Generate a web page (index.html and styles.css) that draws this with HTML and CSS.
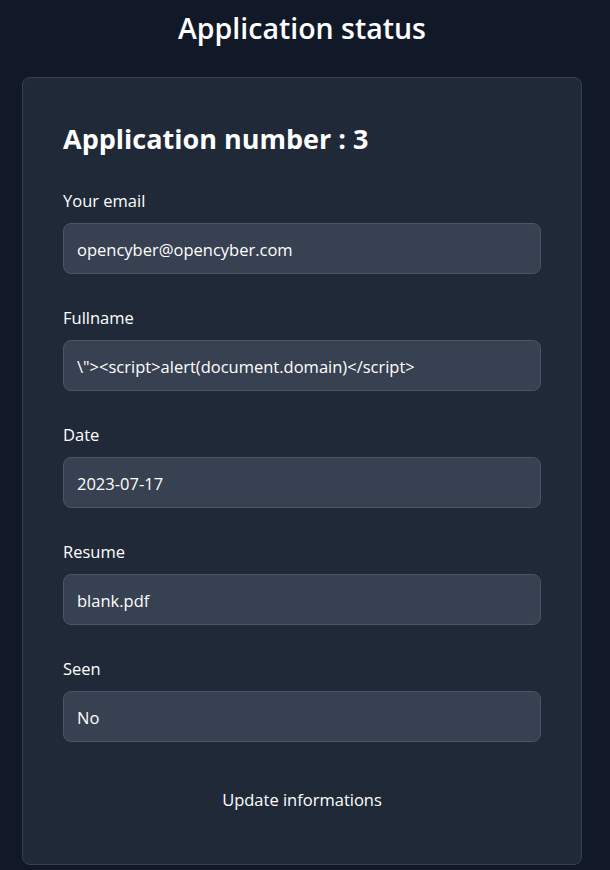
FILE: index.html
```html
<!DOCTYPE html>
<html lang="en">
<head>
<meta charset="utf-8">
<title>Application status</title>
<link rel="stylesheet" href="styles.css">
</head>
<body>
<main class="page">
  <h1 class="page-title">Application status</h1>
  <section class="card">
    <h2 class="card-title">Application number : 3</h2>
    <div class="field">
      <label class="field-label">Your email</label>
      <div class="field-value">opencyber@opencyber.com</div>
    </div>
    <div class="field">
      <label class="field-label">Fullname</label>
      <div class="field-value">\"&gt;&lt;script&gt;alert(document.domain)&lt;/script&gt;</div>
    </div>
    <div class="field">
      <label class="field-label">Date</label>
      <div class="field-value">2023-07-17</div>
    </div>
    <div class="field">
      <label class="field-label">Resume</label>
      <div class="field-value">blank.pdf</div>
    </div>
    <div class="field">
      <label class="field-label">Seen</label>
      <div class="field-value">No</div>
    </div>
    <div class="actions">
      <button class="update-btn" type="button">Update informations</button>
    </div>
  </section>
</main>
</body>
</html>
```
FILE: styles.css
```css
* {
  box-sizing: border-box;
}

html, body {
  margin: 0;
  padding: 0;
  background: #111827;
}

body {
  font-family: "Open Sans", "Noto Sans", sans-serif;
  color: #ffffff;
  font-size: 16.5px;
  line-height: 24px;
}

.page {
  width: 560px;
  margin-left: 22px;
  padding-top: 10px;
  display: flex;
  flex-direction: column;
}

.page-title {
  margin: 0 0 31px 0;
  font-size: 28.5px;
  line-height: 36px;
  font-weight: 600;
  text-align: center;
  color: #ffffff;
}

.card {
  background: #1f2937;
  border: 1px solid #374151;
  border-radius: 8px;
  padding: 40px;
  display: flex;
  flex-direction: column;
}

.card-title {
  margin: 0 0 32px 0;
  padding-top: 3px;
  font-size: 27px;
  line-height: 36px;
  font-weight: 700;
  color: #ffffff;
}

.field {
  display: flex;
  flex-direction: column;
  margin-bottom: 32px;
}

.field-label {
  display: block;
  margin-bottom: 10px;
  font-size: 16.5px;
  line-height: 24px;
  color: #ffffff;
}

.field-value {
  background: #374151;
  border: 1px solid #4b5563;
  border-radius: 8px;
  padding: 14px 13px 11px 13px;
  font-size: 16.5px;
  line-height: 24px;
  color: #ffffff;
  white-space: nowrap;
}

.actions {
  display: flex;
  justify-content: center;
  margin-top: 2px;
}

.update-btn {
  background: transparent;
  border: none;
  padding: 12px 20px;
  font-family: inherit;
  font-size: 16.5px;
  line-height: 24px;
  color: #ffffff;
  cursor: pointer;
}
```
